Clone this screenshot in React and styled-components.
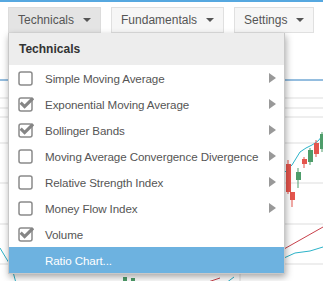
import React from 'react';
import styled, { createGlobalStyle } from 'styled-components';

const GlobalStyle = createGlobalStyle`
  html, body {
    margin: 0;
    padding: 0;
    background: #fff;
    font-family: "Liberation Sans", Arial, sans-serif;
  }
`;

const Page = styled.div`
  position: relative;
  width: 323px;
  height: 281px;
  overflow: hidden;
  border-top: 2px solid #56a8e0;
  box-sizing: border-box;
`;

const Chart = styled.svg`
  position: absolute;
  top: 0;
  left: 0;
  z-index: 0;
`;

const Toolbar = styled.div`
  position: relative;
  z-index: 1;
  display: flex;
  gap: 10px;
  padding: 5px 8px 0;
`;

const MenuWrap = styled.div`
  position: relative;
`;

const ToolButton = styled.div`
  display: flex;
  align-items: center;
  gap: 9px;
  height: 26px;
  padding: 0 9px;
  box-sizing: border-box;
  font-size: 12px;
  color: #555;
  background: ${(p) => (p.$active ? '#e4e4e4' : '#f6f6f6')};
  border: 1px solid ${(p) => (p.$active ? '#dcdcdc' : '#e0e0e0')};
`;

const Caret = styled.span`
  width: 0;
  height: 0;
  border-left: 4px solid transparent;
  border-right: 4px solid transparent;
  border-top: 4px solid #555;
`;

const Menu = styled.div`
  position: absolute;
  top: 100%;
  left: 0;
  width: 277px;
  background: #fff;
  border: 1px solid #c8c8c8;
  border-top: none;
  box-sizing: border-box;
  box-shadow: 1px 3px 7px rgba(0, 0, 0, 0.35);
`;

const MenuHeader = styled.div`
  height: 32px;
  display: flex;
  align-items: center;
  padding-left: 10px;
  background: #ededed;
  font-size: 12px;
  font-weight: bold;
  color: #333;
`;

const Item = styled.div`
  height: 26px;
  display: flex;
  align-items: center;
  padding: 0 8px 0 9px;
  font-size: 11.6px;
  letter-spacing: -0.1px;
  white-space: nowrap;
  color: ${(p) => (p.$selected ? '#fff' : '#555')};
  background: ${(p) => (p.$selected ? '#6db2e0' : 'transparent')};
`;

const CheckSlot = styled.span`
  width: 16px;
  height: 16px;
  margin-right: 11px;
  display: flex;
  align-items: center;
`;

const Label = styled.span`
  flex: 1;
`;

const Arrow = styled.span`
  width: 0;
  height: 0;
  border-top: 5px solid transparent;
  border-bottom: 5px solid transparent;
  border-left: 7px solid #999;
`;

const CheckBox = ({ checked }) => (
  <svg width="16" height="16" viewBox="0 0 16 16">
    <rect x="1" y="2" width="13" height="13" rx="2" fill="#fff" stroke="#8a8a8a" strokeWidth="1.5" />
    {checked && (
      <path d="M3.8 7.8 L6.6 10.6 L14 3.2" fill="none" stroke="#858585" strokeWidth="3.2" strokeLinecap="square" />
    )}
  </svg>
);

const items = [
  { name: 'Simple Moving Average', checked: false, sub: true },
  { name: 'Exponential Moving Average', checked: true, sub: true },
  { name: 'Bollinger Bands', checked: true, sub: true },
  { name: 'Moving Average Convergence Divergence', checked: false, sub: true },
  { name: 'Relative Strength Index', checked: false, sub: true },
  { name: 'Money Flow Index', checked: false, sub: true },
  { name: 'Volume', checked: true, sub: false },
];

const candles = [
  { x: 290, y1: 190, y2: 198, top: 193, bot: 205, up: false },
  { x: 296, y1: 170, y2: 178, top: 166, bot: 186, up: true },
  { x: 302, y1: 157, y2: 162, top: 155, bot: 166, up: false },
  { x: 308, y1: 148, y2: 160, top: 146, bot: 163, up: true },
  { x: 314, y1: 141, y2: 152, top: 138, bot: 155, up: false },
  { x: 320, y1: 132, y2: 147, top: 130, bot: 150, up: true },
  { x: 286, y1: 162, y2: 190, top: 158, bot: 192, up: false },
];

const BackgroundChart = () => (
  <Chart width="323" height="281">
    <line x1="0" y1="78" x2="323" y2="78" stroke="#2b7cbf" strokeWidth="1" />
    <line x1="0" y1="96" x2="323" y2="96" stroke="#ddd" />
    <line x1="0" y1="106" x2="323" y2="106" stroke="#ddd" />
    <line x1="0" y1="115" x2="323" y2="115" stroke="#ddd" />
    <line x1="0" y1="141" x2="323" y2="141" stroke="#ddd" />
    <line x1="0" y1="181" x2="323" y2="181" stroke="#ddd" />
    <line x1="0" y1="222" x2="323" y2="222" stroke="#ddd" />
    <line x1="0" y1="262" x2="323" y2="262" stroke="#ddd" />
    <line x1="240" y1="262" x2="240" y2="281" stroke="#ddd" />
    <polyline points="284,171 292,163 300,150 306,146 312,143 318,139 323,133" fill="none" stroke="#2cb3c9" strokeWidth="1" />
    <polyline points="0,246 6,256 12,266 16,281" fill="none" stroke="#2cb3c9" strokeWidth="1" />
    <polyline points="226,281 234,275" fill="none" stroke="#2cb3c9" strokeWidth="1" />
    <polyline points="284,247 300,238 323,225" fill="none" stroke="#c8414b" strokeWidth="1" />
    <polyline points="205,281 220,276" fill="none" stroke="#c8414b" strokeWidth="1" />
    <polyline points="284,256 295,251 310,249 323,245" fill="none" stroke="#2cb3c9" strokeWidth="1" />
    {candles.map((c, i) => (
      <g key={i}>
        <line x1={c.x + 2} y1={c.top} x2={c.x + 2} y2={c.bot} stroke={c.up ? '#4e9d6a' : '#e5554d'} />
        <rect x={c.x} y={c.y1} width="5" height={c.y2 - c.y1} fill={c.up ? '#4e9d6a' : '#e5554d'} />
      </g>
    ))}
    <rect x="123" y="275" width="4" height="6" fill="#4e9d6a" />
    <rect x="131" y="276" width="4" height="5" fill="#4e9d6a" />
  </Chart>
);

const App = () => (
  <>
    <GlobalStyle />
    <Page>
      <BackgroundChart />
      <Toolbar>
        <MenuWrap>
          <ToolButton $active>
            Technicals <Caret />
          </ToolButton>
          <Menu>
            <MenuHeader>Technicals</MenuHeader>
            {items.map((item) => (
              <Item key={item.name}>
                <CheckSlot>
                  <CheckBox checked={item.checked} />
                </CheckSlot>
                <Label>{item.name}</Label>
                {item.sub && <Arrow />}
              </Item>
            ))}
            <Item $selected>
              <CheckSlot />
              <Label>Ratio Chart...</Label>
            </Item>
          </Menu>
        </MenuWrap>
        <ToolButton>
          Fundamentals <Caret />
        </ToolButton>
        <ToolButton>
          Settings <Caret />
        </ToolButton>
      </Toolbar>
    </Page>
  </>
);

export default App;
